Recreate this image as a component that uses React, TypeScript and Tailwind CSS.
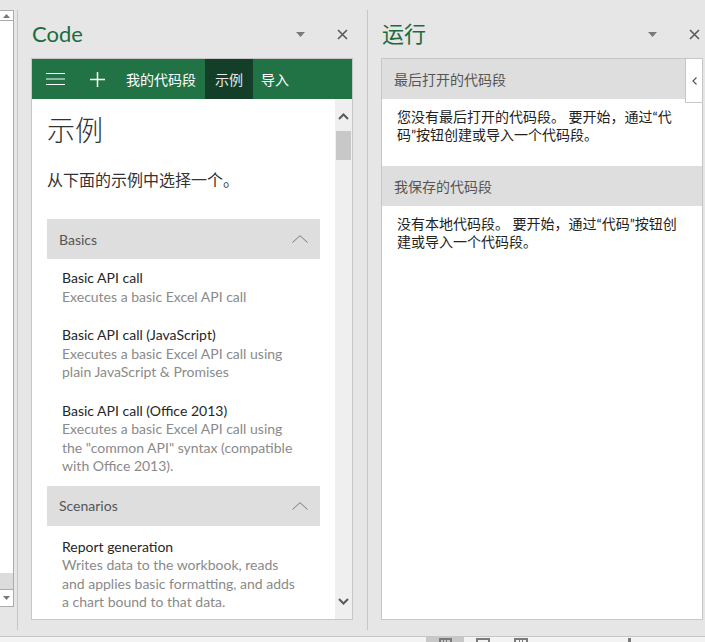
import { ReactNode } from 'react';

const samples = [
  {
    title: 'Basic API call',
    desc: 'Executes a basic Excel API call',
  },
  {
    title: 'Basic API call (JavaScript)',
    desc: 'Executes a basic Excel API call using plain JavaScript & Promises',
  },
  {
    title: 'Basic API call (Office 2013)',
    desc: 'Executes a basic Excel API call using the "common API" syntax (compatible with Office 2013).',
  },
];

const scenarios = [
  {
    title: 'Report generation',
    desc: 'Writes data to the workbook, reads and applies basic formatting, and adds a chart bound to that data.',
  },
];

const Caret = () => (
  <svg width="9" height="5" viewBox="0 0 9 5">
    <path d="M0 0h9L4.5 5z" fill="#7a7a7a" />
  </svg>
);

const Close = () => (
  <svg width="11" height="11" viewBox="0 0 11 11">
    <path d="M1 1l9 9M10 1l-9 9" stroke="#5a5a5a" strokeWidth="1.6" />
  </svg>
);

const PaneTitle = ({ children }: { children: ReactNode }) => (
  <div className="h-[48px] flex items-center justify-between pr-[5px]">
    <span className="text-[22px] font-normal text-[#1b6b3e] leading-none pl-[1px] pb-[1px]">{children}</span>
    <div className="flex items-center gap-[32px]">
      <Caret />
      <Close />
    </div>
  </div>
);

const GroupHeader = ({ label }: { label: string }) => (
  <div className="h-[40px] bg-[#dedede] flex items-center justify-between pl-[12px] pr-[12px] text-[14px] text-[#555]">
    <span>{label}</span>
    <svg width="16" height="8" viewBox="0 0 16 8">
      <path d="M0.5 7.5L8 0.7l7.5 6.8" stroke="#7a7a7a" strokeWidth="1" fill="none" />
    </svg>
  </div>
);

const SampleItem = ({ title, desc }: { title: string; desc: string }) => (
  <div className="pl-[15px] pr-[18px] py-[10px] leading-[18.5px] text-[14px]">
    <div className="text-[#262626]">{title}</div>
    <div className="text-[#8a8a8a]">{desc}</div>
  </div>
);

const App = () => {
  return (
    <div className="w-[705px] h-[642px] bg-[#e6e6e6] flex flex-col overflow-hidden font-['Lato','Noto_Sans_CJK_SC',sans-serif]">
      <div className="h-[636px] flex">
        {/* sheet scroll strip */}
        <div className="w-[14px] mt-[10px] h-[597px] flex flex-col border-r border-[#ababab]">
          <div className="h-[11px] bg-white border-y border-[#ababab] flex items-center justify-center">
            <svg width="7" height="4" viewBox="0 0 7 4">
              <path d="M0 4h7L3.5 0z" fill="#777" />
            </svg>
          </div>
          <div className="flex-1 bg-white" />
          <div className="h-[16px] bg-[#dcdcdc]" />
          <div className="h-[18px] bg-white border-y border-[#ababab] flex items-center justify-center">
            <svg width="7" height="4" viewBox="0 0 7 4">
              <path d="M0 0h7L3.5 4z" fill="#777" />
            </svg>
          </div>
        </div>

        <div className="w-[3px]" />

        {/* Code pane */}
        <div className="w-[350px] mt-[10px] h-[620px] border-l border-[#c6c6c6] pl-[13px] pr-[14px]">
          <PaneTitle>Code</PaneTitle>
          <div className="w-[322px] h-[562px] border border-[#c6c6c6] bg-white flex flex-col">
            <div className="h-[40px] bg-[#217346] flex items-center text-white text-[14px]">
              <svg width="19" height="12" viewBox="0 0 19 12" className="ml-[14px]">
                <path d="M0 0.5h19M0 6h19M0 11.5h19" stroke="#fff" strokeWidth="1" />
              </svg>
              <svg width="15" height="15" viewBox="0 0 15 15" className="ml-[25px]">
                <path d="M7.5 0v15M0 7.5h15" stroke="#fff" strokeWidth="1.5" />
              </svg>
              <span className="ml-[21px] w-[79px]">我的代码段</span>
              <span className="h-full w-[48px] bg-[#133f28] flex items-center justify-center text-[#e8e8e8]">示例</span>
              <span className="pl-[8px]">导入</span>
            </div>
            <div className="flex-1 flex overflow-hidden">
              <div className="flex-1 px-[15px] pt-[12px] overflow-hidden">
                <div className="text-[28px] font-light leading-[38px] text-[#333]">示例</div>
                <div className="mt-[20px] text-[16px] leading-[22px] text-[#333]">从下面的示例中选择一个。</div>
                <div className="mt-[28px]">
                  <GroupHeader label="Basics" />
                  {samples.map((s) => (
                    <SampleItem key={s.title} {...s} />
                  ))}
                  <GroupHeader label="Scenarios" />
                  <div className="pt-[2px]">
                    {scenarios.map((s) => (
                      <SampleItem key={s.title} {...s} />
                    ))}
                  </div>
                </div>
              </div>
              <div className="w-[17px] bg-[#efefef] flex flex-col items-center">
                <div className="h-[32px] flex items-center justify-center pt-[2px]">
                  <svg width="11" height="7" viewBox="0 0 11 7">
                    <path d="M1 6L5.5 1.5 10 6" stroke="#5a5a5a" strokeWidth="2" fill="none" />
                  </svg>
                </div>
                <div className="w-[15px] h-[29px] bg-[#c8c8c8]" />
                <div className="flex-1" />
                <div className="h-[32px] flex items-start justify-center pt-[11px]">
                  <svg width="11" height="7" viewBox="0 0 11 7">
                    <path d="M1 1l4.5 4.5L10 1" stroke="#5a5a5a" strokeWidth="2" fill="none" />
                  </svg>
                </div>
              </div>
            </div>
          </div>
        </div>

        {/* Run pane */}
        <div className="w-[338px] mt-[10px] h-[620px] border-l border-[#c6c6c6] pl-[13px]">
          <PaneTitle>运行</PaneTitle>
          <div className="relative w-[322px] h-[562px] border border-[#c6c6c6] bg-white text-[14px]">
            <div className="h-[40px] bg-[#dedede] flex items-center pl-[12px] text-[#555]">最后打开的代码段</div>
            <div className="pl-[15px] pr-[22px] pt-[9px] pb-[22px] leading-[18px] text-[#222]">
              您没有最后打开的代码段。 要开始，通过“代码”按钮创建或导入一个代码段。
            </div>
            <div className="h-[40px] bg-[#dedede] flex items-center pl-[12px] text-[#555]">我保存的代码段</div>
            <div className="pl-[15px] pr-[22px] pt-[9px] leading-[18px] text-[#222]">
              没有本地代码段。 要开始，通过“代码”按钮创建或导入一个代码段。
            </div>
            <div className="absolute right-0 top-0 w-[17px] h-[44px] bg-white border-l border-b border-[#c6c6c6] flex items-center justify-center">
              <svg width="5" height="8" viewBox="0 0 5 8">
                <path d="M4.5 0.5L1 4l3.5 3.5" stroke="#555" strokeWidth="1.2" fill="none" />
              </svg>
            </div>
          </div>
        </div>
      </div>

      {/* status bar */}
      <div className="h-[6px] border-t border-[#c6c6c6] bg-[#f3f3f3] flex pl-[426px]">
        <div className="w-[38px] h-full bg-[#c8c8c8] flex justify-center pt-[1px]">
          <div className="w-[13px] h-[6px] border-t-2 border-x-2 border-[#7a7a7a] flex justify-evenly">
            <div className="w-[1px] bg-[#7a7a7a]" />
            <div className="w-[1px] bg-[#7a7a7a]" />
          </div>
        </div>
        <div className="w-[38px] flex justify-center pt-[1px]">
          <div className="w-[14px] h-[6px] border-t-2 border-x-2 border-[#7a7a7a]" />
        </div>
        <div className="w-[38px] flex justify-center pt-[1px]">
          <div className="w-[14px] h-[6px] border-t-2 border-x-2 border-[#7a7a7a] flex justify-evenly">
            <div className="w-[1px] bg-[#7a7a7a]" />
            <div className="w-[1px] bg-[#7a7a7a]" />
          </div>
        </div>
        <div className="w-[91px] flex justify-end pt-[1px]">
          <div className="w-[3px] h-[5px] bg-[#7a7a7a]" />
        </div>
      </div>
    </div>
  );
};

export default App;
